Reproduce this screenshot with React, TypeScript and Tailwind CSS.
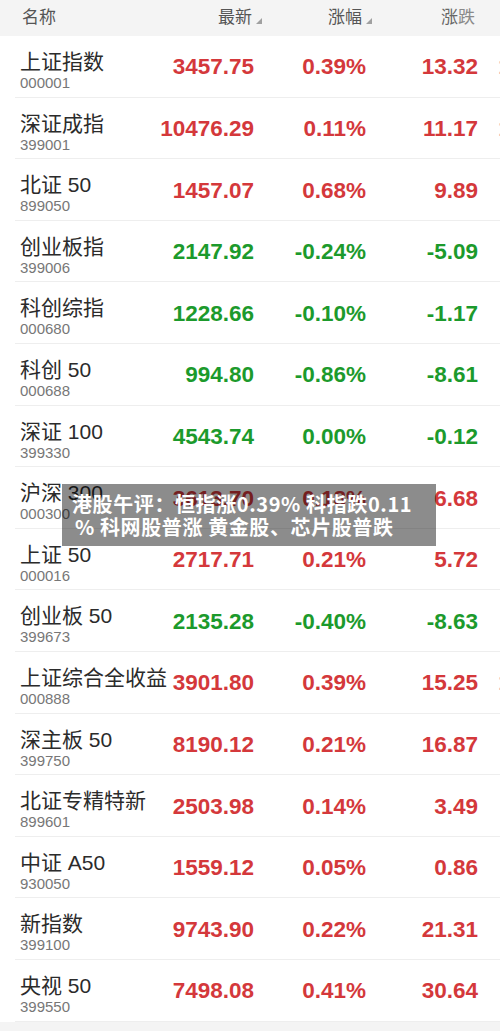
type Quote = {
  name: string;
  code: string;
  last: string;
  pct: string;
  chg: string;
  speed: string;
};

const quotes: Quote[] = [
  { name: "上证指数", code: "000001", last: "3457.75", pct: "0.39%", chg: "13.32", speed: "1" },
  { name: "深证成指", code: "399001", last: "10476.29", pct: "0.11%", chg: "11.17", speed: "1" },
  { name: "北证 50", code: "899050", last: "1457.07", pct: "0.68%", chg: "9.89", speed: "" },
  { name: "创业板指", code: "399006", last: "2147.92", pct: "-0.24%", chg: "-5.09", speed: "" },
  { name: "科创综指", code: "000680", last: "1228.66", pct: "-0.10%", chg: "-1.17", speed: "" },
  { name: "科创 50", code: "000688", last: "994.80", pct: "-0.86%", chg: "-8.61", speed: "" },
  { name: "深证 100", code: "399330", last: "4543.74", pct: "0.00%", chg: "-0.12", speed: "" },
  { name: "沪深 300", code: "000300", last: "3613.70", pct: "0.18%", chg: "6.68", speed: "" },
  { name: "上证 50", code: "000016", last: "2717.71", pct: "0.21%", chg: "5.72", speed: "" },
  { name: "创业板 50", code: "399673", last: "2135.28", pct: "-0.40%", chg: "-8.63", speed: "" },
  { name: "上证综合全收益", code: "000888", last: "3901.80", pct: "0.39%", chg: "15.25", speed: "1" },
  { name: "深主板 50", code: "399750", last: "8190.12", pct: "0.21%", chg: "16.87", speed: "" },
  { name: "北证专精特新", code: "899601", last: "2503.98", pct: "0.14%", chg: "3.49", speed: "" },
  { name: "中证 A50", code: "930050", last: "1559.12", pct: "0.05%", chg: "0.86", speed: "" },
  { name: "新指数", code: "399100", last: "9743.90", pct: "0.22%", chg: "21.31", speed: "" },
  { name: "央视 50", code: "399550", last: "7498.08", pct: "0.41%", chg: "30.64", speed: "" },
];

const font = { fontFamily: '"Liberation Sans", "Noto Sans CJK SC", sans-serif' };

function SortMark() {
  return (
    <svg width="6" height="6" viewBox="0 0 6 6" className="ml-[4px] mt-[13px]">
      <path d="M6 0 L6 6 L0 6 Z" fill="#a0a0a0" />
    </svg>
  );
}

function colorOf(chg: string) {
  if (chg.startsWith("-")) return "text-[#1c9a2c]";
  return "text-[#d4383b]";
}

export default function App() {
  return (
    <div className="relative h-[1031px] w-[500px] overflow-hidden bg-[#f4f4f4]" style={font}>
      <div className="grid h-[36px] grid-cols-[148px_92px_110px_103px_1fr] items-center bg-[#f4f4f4] pl-[22px] text-[17px] text-[#555]">
        <span>名称</span>
        <span className="flex justify-end">
          最新
          <SortMark />
        </span>
        <span className="flex justify-end">
          涨幅
          <SortMark />
        </span>
        <span className="flex justify-end text-[#666]">
          涨<span className="text-[#8a8a8a]">跌</span>
        </span>
        <span />
      </div>

      <div className="bg-white">
        {quotes.map((q) => {
          const color = colorOf(q.chg);
          return (
            <div key={q.code} className="ml-[15px] h-[61.6px] border-b border-[#eeeeee]">
              <div className="grid h-full grid-cols-[150px_84px_112px_112px_1fr] pl-[5px]">
                <div className="flex flex-col pt-[14px]">
                  <span className="whitespace-nowrap text-[21px] leading-[24px] text-[#2b2b2b]">{q.name}</span>
                  <span className="text-[15px] leading-[18px] text-[#777]">{q.code}</span>
                </div>
                <div className={`flex items-center justify-end pt-[2px] text-[22.5px] font-bold ${color}`}>{q.last}</div>
                <div className={`flex items-center justify-end pt-[2px] text-[22.5px] font-bold ${color}`}>{q.pct}</div>
                <div className={`flex items-center justify-end pt-[2px] text-[22.5px] font-bold ${color}`}>{q.chg}</div>
                <div className={`flex items-center overflow-hidden pl-[20px] pt-[2px] text-[22.5px] font-bold opacity-40 ${color}`}>
                  {q.speed}
                </div>
              </div>
            </div>
          );
        })}
      </div>

      <div
        className="absolute left-[62px] top-[484px] h-[62px] w-[374px] bg-black/45 pl-[10px] pt-[8px] text-[20px] font-bold leading-[23px] tracking-[0.6px] text-white"
        style={{ fontFamily: '"Noto Sans CJK SC", "Liberation Sans", sans-serif' }}
      >
        港股午评：恒指涨0.39% 科指跌0.11
        <br />
        <span className="pl-[3px]">% 科网股普涨 黄金股、芯片股普跌</span>
      </div>
    </div>
  );
}
